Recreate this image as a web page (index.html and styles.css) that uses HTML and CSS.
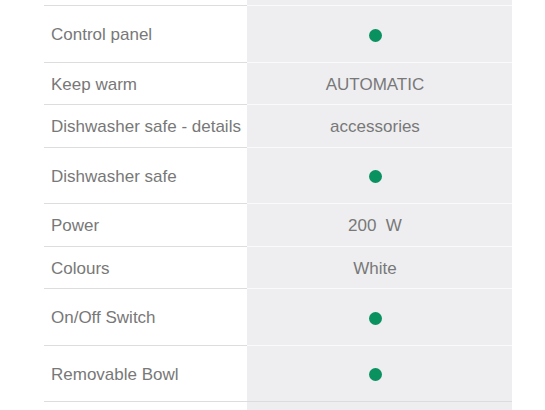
FILE: index.html
```html
<!DOCTYPE html>
<html lang="en">
<head>
<meta charset="utf-8">
<title>Specifications</title>
<link rel="stylesheet" href="styles.css">
</head>
<body>
<div class="spec">
  <div class="cell label edge"></div><div class="cell value edge"></div>

  <div class="cell label tall">Control panel</div>
  <div class="cell value tall"><span class="dot"></span></div>

  <div class="cell label short">Keep warm</div>
  <div class="cell value short">AUTOMATIC</div>

  <div class="cell label short">Dishwasher safe - details</div>
  <div class="cell value short">accessories</div>

  <div class="cell label tall">Dishwasher safe</div>
  <div class="cell value tall"><span class="dot"></span></div>

  <div class="cell label short">Power</div>
  <div class="cell value short">200&nbsp; W</div>

  <div class="cell label short">Colours</div>
  <div class="cell value short">White</div>

  <div class="cell label tall">On/Off Switch</div>
  <div class="cell value tall"><span class="dot"></span></div>

  <div class="cell label tall">Removable Bowl</div>
  <div class="cell value tall last"><span class="dot"></span></div>

  <div class="cell label short empty"></div>
  <div class="cell value short empty"></div>
</div>
</body>
</html>
```
FILE: styles.css
```css
html, body {
  margin: 0;
  padding: 0;
  background: #ffffff;
}

body {
  font-family: "Liberation Sans", Arial, sans-serif;
  font-size: 17px;
  color: #787878;
}

.spec {
  display: grid;
  grid-template-columns: 203px 265px;
  margin-left: 44px;
}

.cell {
  box-sizing: border-box;
  display: flex;
  align-items: center;
  padding-top: 3px;
  line-height: 20px;
  border-bottom: 1px solid #dddddf;
}

.label {
  padding-left: 7px;
  white-space: nowrap;
}

.value {
  background: #eeeef1;
  justify-content: center;
  padding-right: 9px;
  border-bottom-color: #fafafc;
}

.value.last {
  border-bottom-color: #dcdcdf;
}

.edge {
  height: 6px;
  padding-top: 0;
}

.tall {
  height: 56.5px;
}

.short {
  height: 42.5px;
}

.empty {
  border-bottom: none;
}

.dot {
  display: block;
  width: 13px;
  height: 13px;
  border-radius: 50%;
  background: #0a9160;
}
```
